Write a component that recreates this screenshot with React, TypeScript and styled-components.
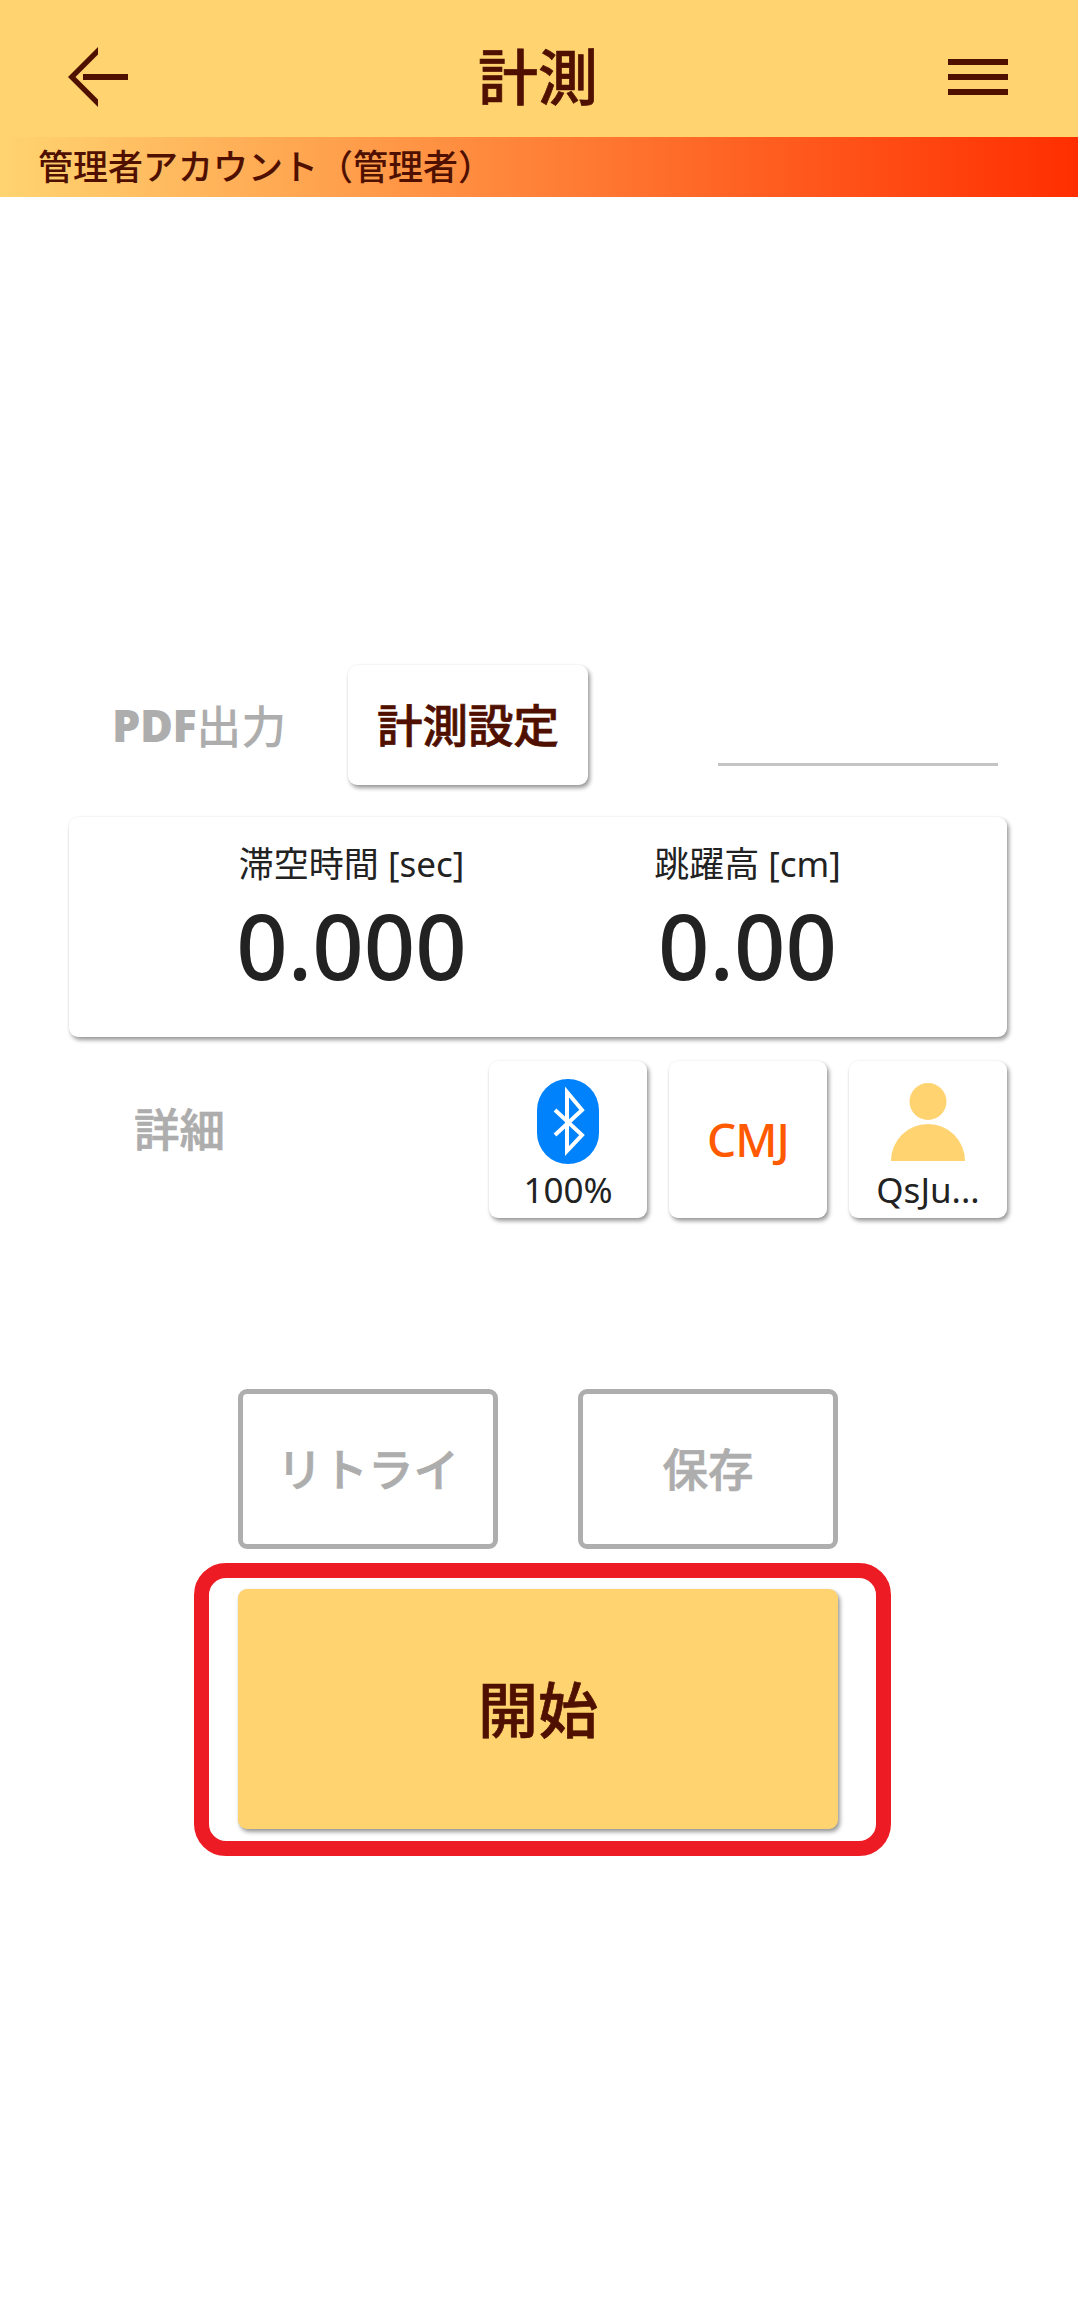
import React from "react";
import styled, { createGlobalStyle, css } from "styled-components";

const Global = createGlobalStyle`
  html, body { margin: 0; padding: 0; background: #fff; }
  body { font-family: "Noto Sans", "Noto Sans CJK JP", sans-serif; }
`;
const heavyCjk = css`
  font-family: "Noto Sans CJK JP", sans-serif; font-weight: 500; -webkit-text-stroke: 0.7px currentColor;
`;
const Page = styled.div`
  width: 1078px; height: 2302px; overflow: hidden; display: flex; flex-direction: column;
`;
const Header = styled.header`
  height: 137px; background: #ffd470; display: flex; align-items: center; justify-content: space-between;
  padding: 17px 70px 0 68px; box-sizing: border-box;
`;
const Title = styled.h1`
  margin: -6px 0 0; font-size: 60px; color: #4f1000; line-height: 1; ${heavyCjk}
`;
const Banner = styled.div`
  height: 60px; box-sizing: border-box; padding: 0 0 6px 38px; display: flex; align-items: center;
  background: linear-gradient(90deg, #ffd470 0%, #ff2e00 100%);
  color: #4f1000; font-size: 35px; font-weight: 500; font-family: "Noto Sans CJK JP", sans-serif;
`;
const TabRow = styled.div`
  margin-top: 468px; height: 120px; padding: 0 80px 0 112px; display: flex; align-items: stretch;
`;
const PdfTab = styled.div`
  width: 176px; margin-top: -2px; display: flex; align-items: center; color: #adadad;
  font-size: 45px; font-weight: 500; white-space: nowrap;
  font-family: "Noto Sans CJK JP", sans-serif;
`;
const PdfLatin = styled.span`
  font-family: "Noto Sans", sans-serif; font-weight: 900; letter-spacing: -0.5px;
`;
const ActiveTab = styled.div`
  margin-left: 60px; width: 240px; background: #fff; border-radius: 9px; display: flex; align-items: center; justify-content: center;
  box-shadow: 2px 3px 4px rgba(0,0,0,.4), 0 0 2px rgba(0,0,0,.08); box-sizing: border-box; padding-bottom: 5px;
  color: #4f1000; font-size: 45.5px; ${heavyCjk}
`;
const Underline = styled.div`
  margin-left: auto; width: 280px; height: 3px; margin-top: 98px; background: #c4c4c4;
`;
const ResultCard = styled.section`
  margin: 32px 71px 0 69px; height: 220px; background: #fff; border-radius: 9px;
  box-shadow: 2px 3px 4px rgba(0,0,0,.4), 0 0 2px rgba(0,0,0,.08);
  display: grid; grid-template-columns: 396px 225px; padding-left: 170px;
`;
const Metric = styled.div`
  width: 225px; display: flex; flex-direction: column; align-items: center; padding-top: 26px; box-sizing: border-box; white-space: nowrap;
`;
const MetricLabel = styled.div`
  font-size: 35px; line-height: 42px; color: #222; font-family: "Noto Sans", "Noto Sans CJK JP", sans-serif;
`;
const MetricValue = styled.div`
  font-size: 90px; line-height: 120px; font-weight: 500; color: #222;
`;
const StatusRow = styled.div`
  margin: 24px 71px 0 0; height: 157px; display: flex; gap: 22px; justify-content: flex-end;
`;
const DetailLabel = styled.div`
  margin-right: auto; margin-left: 134px; height: 132px; display: flex; align-items: center; font-size: 45.5px; color: #adadad; ${heavyCjk}
`;
const Tile = styled.div`
  width: 158px; height: 157px; background: #fff; border-radius: 9px; display: flex; flex-direction: column; align-items: center; justify-content: flex-start;
  box-shadow: 2px 3px 4px rgba(0,0,0,.4), 0 0 2px rgba(0,0,0,.08); box-sizing: border-box; padding-top: 18px;
`;
const TileText = styled.div`
  font-size: 35px; line-height: 40px; color: #222; margin-top: 6px; white-space: nowrap;
`;
const CmjText = styled.div`
  margin-top: 30px; font-size: 46px; line-height: 60px; font-weight: 500; color: #ff5a00; letter-spacing: -1px;
`;
const OutlineRow = styled.div`
  margin-top: 171px; padding-left: 238px; display: flex; gap: 80px;
`;
const OutlineButton = styled.div`
  width: 260px; height: 160px; box-sizing: border-box; border: 5px solid #aeaeae; border-radius: 9px; background: #fff; padding-bottom: 5px;
  display: flex; align-items: center; justify-content: center; color: #adadad; font-size: 45.5px; ${heavyCjk}
`;
const Highlight = styled.div`
  margin: 14px 0 0 194px; width: 697px; height: 293px; box-sizing: border-box; border: 15px solid #ed1c24; border-radius: 32px;
  padding: 11px 0 0 29px;
`;
const StartButton = styled.div`
  width: 600px; height: 240px; background: #ffd470; border-radius: 9px; display: flex; align-items: center; justify-content: center;
  box-shadow: 2px 3px 4px rgba(0,0,0,.4), 0 0 2px rgba(0,0,0,.08); box-sizing: border-box; padding-bottom: 5px;
  color: #4f1000; font-size: 60px; ${heavyCjk}
`;

const BackArrow = () => (
  <svg width="60" height="60" viewBox="0 0 60 60" fill="#4f1000">
    <path d="M30 0 L0 30 L30 60 V52.5 L7.5 30 L30 7.5 Z" />
    <rect x="15" y="27" width="45" height="6" />
  </svg>
);
const Menu = () => (
  <svg width="60" height="36" viewBox="0 0 60 36" fill="#4f1000">
    <rect x="0" y="0" width="60" height="6" />
    <rect x="0" y="15" width="60" height="6" />
    <rect x="0" y="30" width="60" height="6" />
  </svg>
);
const Bluetooth = () => (
  <svg width="62" height="85" viewBox="0 0 62 85" style={{ display: "block" }}>
    <rect x="0" y="0" width="62" height="85" rx="31" fill="#0082fc" />
    <path d="M18 31 L45 56 L30 72 V13 L45 31 L18 56" fill="none" stroke="#fff" strokeWidth="4" />
  </svg>
);
const Person = () => (
  <svg width="74" height="85" viewBox="0 0 74 85" style={{ display: "block" }}>
    <circle cx="37" cy="22.5" r="18.5" fill="#ffd470" />
    <path d="M0 82 A37 37 0 0 1 74 82 Z" fill="#ffd470" />
  </svg>
);

export default function App() {
  return (
    <Page>
      <Global />
      <Header>
        <BackArrow />
        <Title>計測</Title>
        <Menu />
      </Header>
      <Banner>管理者アカウント（管理者）</Banner>
      <TabRow>
        <PdfTab><PdfLatin>PDF</PdfLatin>出力</PdfTab>
        <ActiveTab>計測設定</ActiveTab>
        <Underline />
      </TabRow>
      <ResultCard>
        <Metric>
          <MetricLabel>滞空時間 [sec]</MetricLabel>
          <MetricValue>0.000</MetricValue>
        </Metric>
        <Metric>
          <MetricLabel>跳躍高 [cm]</MetricLabel>
          <MetricValue>0.00</MetricValue>
        </Metric>
      </ResultCard>
      <StatusRow>
        <DetailLabel>詳細</DetailLabel>
        <Tile>
          <Bluetooth />
          <TileText>100%</TileText>
        </Tile>
        <Tile>
          <CmjText>CMJ</CmjText>
        </Tile>
        <Tile>
          <Person />
          <TileText>QsJu...</TileText>
        </Tile>
      </StatusRow>
      <OutlineRow>
        <OutlineButton>リトライ</OutlineButton>
        <OutlineButton>保存</OutlineButton>
      </OutlineRow>
      <Highlight>
        <StartButton>開始</StartButton>
      </Highlight>
    </Page>
  );
}
